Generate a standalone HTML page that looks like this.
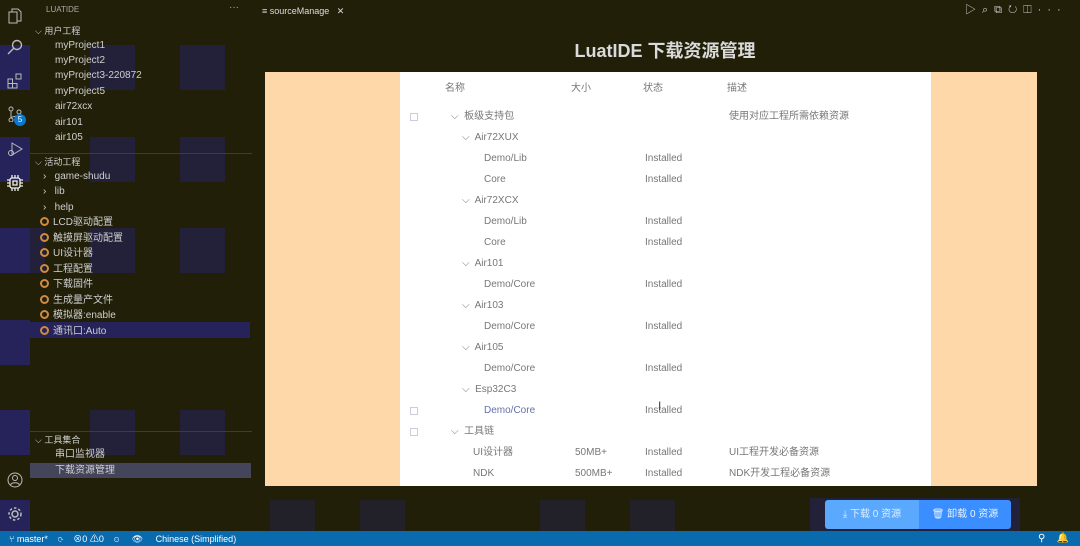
<!DOCTYPE html>
<html><head><meta charset="utf-8"><style>
*{margin:0;padding:0;box-sizing:border-box}
body{width:1080px;height:546px;overflow:hidden;background:#211f08;font-family:"Liberation Sans","Noto Sans CJK SC",sans-serif;position:relative;color:#ccc}
.a{position:absolute;white-space:nowrap;line-height:12px}
.blk{position:absolute;background:#25235a}
.side{font-size:10px;color:#cfcfcf}
.t{font-size:10px;color:#777}
.ico{position:absolute;left:7px;width:16px;height:16px}
.cog{display:inline-block;width:9px;height:9px;border:2px solid #d08a40;border-radius:50%;margin-right:4px;vertical-align:-1px}
</style></head><body>
<div class="blk" style="left:0;top:45px;width:30px;height:45px"></div>
<div class="blk" style="left:0;top:137px;width:30px;height:45px"></div>
<div class="blk" style="left:0;top:228px;width:30px;height:45px"></div>
<div class="blk" style="left:0;top:320px;width:30px;height:45px"></div>
<div class="blk" style="left:0;top:410px;width:30px;height:45px"></div>
<div class="blk" style="left:0;top:500px;width:30px;height:31px"></div>
<div class="blk" style="left:90px;top:45px;width:45px;height:45px;opacity:.6"></div>
<div class="blk" style="left:180px;top:45px;width:45px;height:45px;opacity:.6"></div>
<div class="blk" style="left:90px;top:137px;width:45px;height:45px;opacity:.6"></div>
<div class="blk" style="left:180px;top:137px;width:45px;height:45px;opacity:.6"></div>
<div class="blk" style="left:30px;top:228px;width:15px;height:45px;opacity:.6"></div>
<div class="blk" style="left:90px;top:228px;width:45px;height:45px;opacity:.6"></div>
<div class="blk" style="left:180px;top:228px;width:45px;height:45px;opacity:.6"></div>
<div class="blk" style="left:30px;top:322px;width:220px;height:16px"></div>
<div class="blk" style="left:90px;top:410px;width:45px;height:45px;opacity:.6"></div>
<div class="blk" style="left:180px;top:410px;width:45px;height:45px;opacity:.6"></div>
<div class="blk" style="left:270px;top:500px;width:45px;height:31px;opacity:.4"></div>
<div class="blk" style="left:360px;top:500px;width:45px;height:31px;opacity:.4"></div>
<div class="blk" style="left:540px;top:500px;width:45px;height:31px;opacity:.4"></div>
<div class="blk" style="left:630px;top:500px;width:45px;height:31px;opacity:.4"></div>
<div class="blk" style="left:810px;top:498px;width:210px;height:33px;opacity:.6"></div>

<svg class="ico" style="top:8px" viewBox="0 0 16 16" fill="none" stroke="#bbb"><rect x="2" y="4" width="8" height="11"/><path d="M5 4V1h6l3 3v9h-4"/></svg>
<svg class="ico" style="top:39px" viewBox="0 0 16 16" fill="none" stroke="#bbb" stroke-width="1.4"><circle cx="10" cy="6" r="4.5"/><path d="M7 9L1 15"/></svg>
<svg class="ico" style="top:73px" viewBox="0 0 16 16" fill="none" stroke="#bbb"><rect x="1" y="6" width="4.5" height="4.5"/><rect x="1" y="10.5" width="4.5" height="4.5"/><rect x="5.5" y="10.5" width="4.5" height="4.5"/><rect x="9" y="1" width="5" height="5"/></svg>
<svg class="ico" style="top:106px" viewBox="0 0 16 16" fill="none" stroke="#bbb"><circle cx="4" cy="3" r="2"/><circle cx="4" cy="14" r="2"/><circle cx="12" cy="6" r="2"/><path d="M4 5v7M12 8c0 3-8 2-8 4"/></svg>
<div class="a" style="left:14px;top:114px;width:12px;height:12px;border-radius:50%;background:#0a78d0;color:#fff;font-size:8px;text-align:center;line-height:12px">5</div>
<svg class="ico" style="top:141px" viewBox="0 0 16 16" fill="none" stroke="#bbb"><path d="M5 2l10 6-10 6z"/><circle cx="4" cy="12" r="2.5"/></svg>
<svg class="ico" style="top:175px" viewBox="0 0 16 16" fill="none" stroke="#eee" stroke-width="1.3"><rect x="3" y="3" width="10" height="10" rx="2"/><rect x="6" y="6" width="4" height="4"/><path d="M5 0v3M8 0v3M11 0v3M5 13v3M8 13v3M11 13v3M0 5h3M0 8h3M0 11h3M13 5h3M13 8h3M13 11h3"/></svg>
<svg class="ico" style="top:472px" viewBox="0 0 16 16" fill="none" stroke="#bbb"><circle cx="8" cy="8" r="7"/><circle cx="8" cy="6" r="2.5"/><path d="M3.5 13c1-3 8-3 9 0"/></svg>
<svg class="ico" style="top:506px" viewBox="0 0 16 16" fill="none" stroke="#bbb" stroke-width="1.5"><circle cx="8" cy="8" r="3"/><circle cx="8" cy="8" r="6" stroke-dasharray="2.5 2"/></svg>

<div class="a side" style="left:46px;top:4px;font-size:8px;color:#aaa">LUATIDE</div>
<div class="a side" style="left:229px;top:2px;color:#aaa">···</div>
<div class="a side" style="left:35px;top:25px;font-size:9px">⌵ 用户工程</div>
<div class="a side" style="left:55px;top:40px">myProject1</div>
<div class="a side" style="left:55px;top:55px">myProject2</div>
<div class="a side" style="left:55px;top:70px">myProject3-220872</div>
<div class="a side" style="left:55px;top:86px">myProject5</div>
<div class="a side" style="left:55px;top:101px">air72xcx</div>
<div class="a side" style="left:55px;top:117px">air101</div>
<div class="a side" style="left:55px;top:132px">air105</div>
<div class="a" style="left:30px;top:153px;width:222px;border-top:1px solid #36366a"></div>
<div class="a side" style="left:35px;top:156px;font-size:9px">⌵ 活动工程</div>
<div class="a side" style="left:43px;top:171px">›&nbsp;&nbsp; game-shudu</div>
<div class="a side" style="left:43px;top:186px">›&nbsp;&nbsp; lib</div>
<div class="a side" style="left:43px;top:202px">›&nbsp;&nbsp; help</div>
<div class="a side" style="left:40px;top:217px"><span class="cog"></span>LCD驱动配置</div>
<div class="a side" style="left:40px;top:233px"><span class="cog"></span>触摸屏驱动配置</div>
<div class="a side" style="left:40px;top:248px"><span class="cog"></span>UI设计器</div>
<div class="a side" style="left:40px;top:264px"><span class="cog"></span>工程配置</div>
<div class="a side" style="left:40px;top:279px"><span class="cog"></span>下载固件</div>
<div class="a side" style="left:40px;top:295px"><span class="cog"></span>生成量产文件</div>
<div class="a side" style="left:40px;top:310px"><span class="cog"></span>模拟器:enable</div>
<div class="a side" style="left:40px;top:326px"><span class="cog"></span>通讯口:Auto</div>
<div class="a" style="left:30px;top:431px;width:222px;border-top:1px solid #36366a"></div>
<div class="a side" style="left:35px;top:434px;font-size:9px">⌵ 工具集合</div>
<div class="a side" style="left:55px;top:449px">串口监视器</div>
<div class="a" style="left:30px;top:463px;width:221px;height:15px;background:#44445a"></div>
<div class="a side" style="left:55px;top:465px">下载资源管理</div>

<div class="a" style="left:262px;top:5px;font-size:9px;color:#ddd">≡ sourceManage&nbsp;&nbsp; ✕</div>
<div class="a" style="left:965px;top:4px;font-size:11px;color:#ccc;letter-spacing:6px">▷⌕⧉↻◫···</div>

<div class="a" style="left:0;top:40px;width:1330px;text-align:center;font-size:18px;line-height:22px;font-weight:bold;color:#dadada">LuatIDE 下载资源管理</div>

<div class="a" style="left:265px;top:72px;width:772px;height:414px;background:#fed8a8"></div>
<div class="a" style="left:400px;top:72px;width:531px;height:414px;background:#fff"></div>
<div class="a t" style="left:445px;top:83px">名称</div>
<div class="a t" style="left:571px;top:83px">大小</div>
<div class="a t" style="left:643px;top:83px">状态</div>
<div class="a t" style="left:727px;top:83px">描述</div>

<div class="a t" style="left:451px;top:111px">⌵&nbsp; 板级支持包</div><div class="a t" style="left:729px;top:111px">使用对应工程所需依赖资源</div>
<div class="a t" style="left:462px;top:132px">⌵&nbsp; Air72XUX</div>
<div class="a t" style="left:484px;top:153px">Demo/Lib</div><div class="a t" style="left:645px;top:153px">Installed</div>
<div class="a t" style="left:484px;top:174px">Core</div><div class="a t" style="left:645px;top:174px">Installed</div>
<div class="a t" style="left:462px;top:195px">⌵&nbsp; Air72XCX</div>
<div class="a t" style="left:484px;top:216px">Demo/Lib</div><div class="a t" style="left:645px;top:216px">Installed</div>
<div class="a t" style="left:484px;top:237px">Core</div><div class="a t" style="left:645px;top:237px">Installed</div>
<div class="a t" style="left:462px;top:258px">⌵&nbsp; Air101</div>
<div class="a t" style="left:484px;top:279px">Demo/Core</div><div class="a t" style="left:645px;top:279px">Installed</div>
<div class="a t" style="left:462px;top:300px">⌵&nbsp; Air103</div>
<div class="a t" style="left:484px;top:321px">Demo/Core</div><div class="a t" style="left:645px;top:321px">Installed</div>
<div class="a t" style="left:462px;top:342px">⌵&nbsp; Air105</div>
<div class="a t" style="left:484px;top:363px">Demo/Core</div><div class="a t" style="left:645px;top:363px">Installed</div>
<div class="a t" style="left:462px;top:384px">⌵&nbsp; Esp32C3</div>
<div class="a t" style="left:484px;top:405px;color:#6670a8">Demo/Core</div><div class="a t" style="left:645px;top:405px">Installed</div>
<div class="a t" style="left:451px;top:426px">⌵&nbsp; 工具链</div>
<div class="a t" style="left:473px;top:447px">UI设计器</div><div class="a t" style="left:575px;top:447px">50MB+</div><div class="a t" style="left:645px;top:447px">Installed</div><div class="a t" style="left:729px;top:447px">UI工程开发必备资源</div>
<div class="a t" style="left:473px;top:468px">NDK</div><div class="a t" style="left:575px;top:468px">500MB+</div><div class="a t" style="left:645px;top:468px">Installed</div><div class="a t" style="left:729px;top:468px">NDK开发工程必备资源</div>
<div class="a" style="left:410px;top:113px;width:8px;height:8px;border:1px solid #ccd"></div>
<div class="a" style="left:410px;top:407px;width:8px;height:8px;border:1px solid #ccd"></div>
<div class="a" style="left:410px;top:428px;width:8px;height:8px;border:1px solid #ccd"></div>
<div class="a" style="left:658px;top:400px;font-size:12px;color:#444">I</div>

<div class="a" style="left:825px;top:500px;width:186px;height:29px;border-radius:3px;overflow:hidden">
<div class="a" style="left:0;top:0;width:94px;height:29px;background:#5aa9ff;color:#dbeeff;font-size:10px;text-align:center;line-height:29px">⤓ 下载 0 资源</div>
<div class="a" style="left:94px;top:0;width:92px;height:29px;background:#3b8eff;color:#e8f2ff;font-size:10px;text-align:center;line-height:29px">🗑 卸载 0 资源</div>
</div>

<div class="a" style="left:0;top:531px;width:1080px;height:15px;background:#0a6aae"></div>
<div class="a" style="left:9px;top:533px;font-size:9px;color:#fff">⑂ master*&nbsp;&nbsp;&nbsp; ⟳&nbsp;&nbsp;&nbsp; ⊗0 ⚠0&nbsp;&nbsp;&nbsp; ⚇&nbsp;&nbsp;&nbsp;&nbsp; 👁&nbsp;&nbsp;&nbsp;&nbsp; Chinese (Simplified)</div>
<div class="a" style="left:1038px;top:533px;font-size:10px;color:#fff">⚲&nbsp;&nbsp;&nbsp; 🔔</div>
</body></html>
